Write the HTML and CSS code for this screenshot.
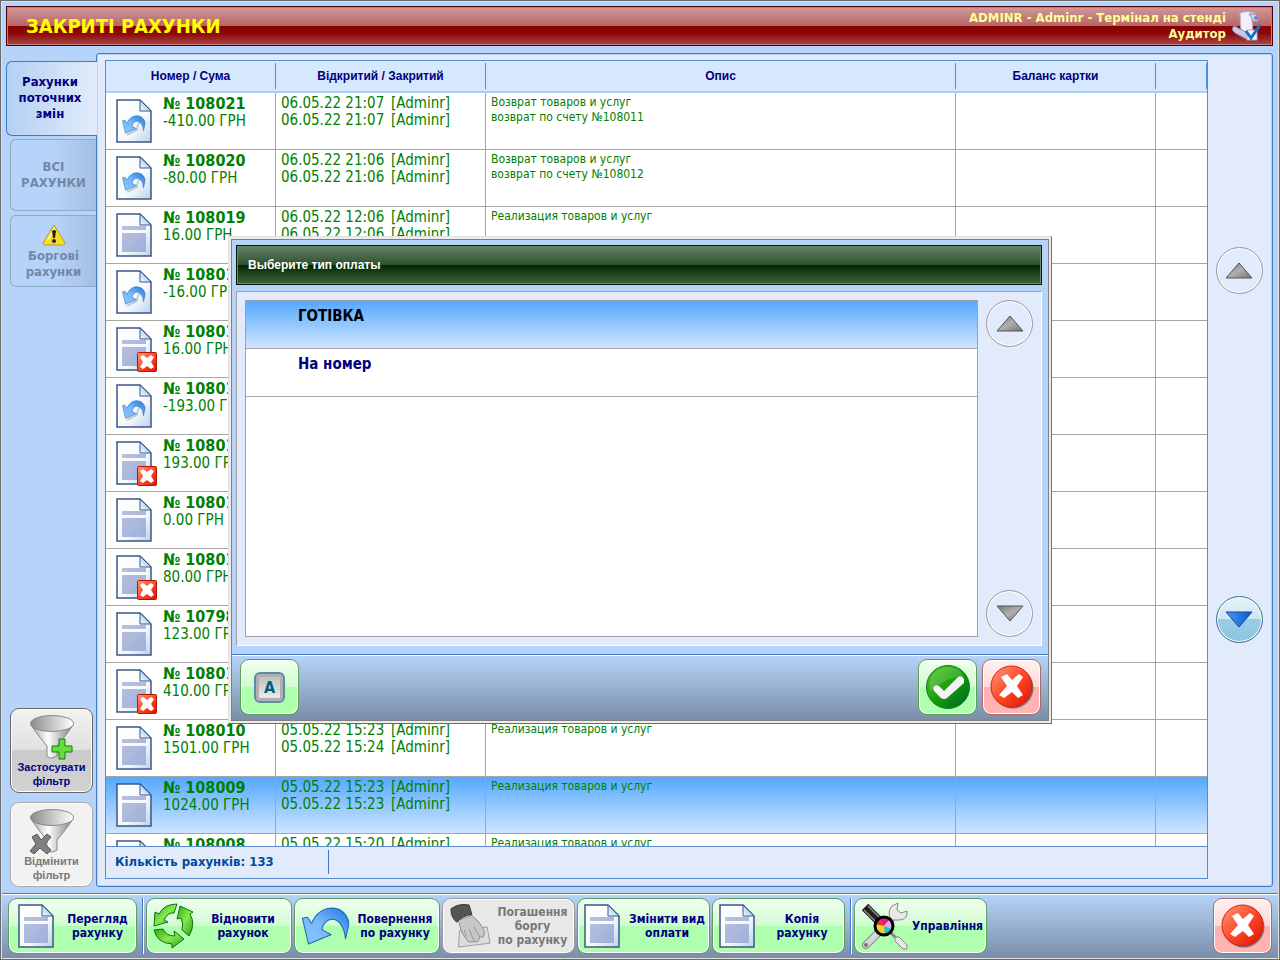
FILE: index.html
```html
<!DOCTYPE html>
<html lang="uk">
<head>
  <meta charset="UTF-8" />
  <meta name="viewport" content="width=device-width, initial-scale=1.0"/>
  <title>Закриті рахунки</title>
  <link rel="stylesheet" href="styles.css">
</head>
<body>
  <!-- shared icons -->
  <svg class="sprite" aria-hidden="true">
    <defs>
      <linearGradient id="paper" x1="0" y1="0" x2="1" y2="1"><stop offset="0" stop-color="#fff"/><stop offset=".6" stop-color="#f6fafd"/><stop offset="1" stop-color="#b9d2ea"/></linearGradient>
      <linearGradient id="fold" x1="0" y1="1" x2="1" y2="0"><stop offset="0" stop-color="#fff"/><stop offset="1" stop-color="#5fb2e6"/></linearGradient>
      <linearGradient id="ink" x1="0" y1="0" x2="1" y2="1"><stop offset="0" stop-color="#bcc0dc"/><stop offset="1" stop-color="#9db0dc"/></linearGradient>
      <linearGradient id="blue" x1="0" y1="1" x2="1" y2="0"><stop offset="0" stop-color="#8cc8ff"/><stop offset=".5" stop-color="#76b6fa"/><stop offset="1" stop-color="#1e78dc"/></linearGradient>
      <linearGradient id="red" x1="0" y1="0" x2="1" y2="1"><stop offset="0" stop-color="#ff9a7c"/><stop offset=".5" stop-color="#fb4a28"/><stop offset="1" stop-color="#e01000"/></linearGradient>
      <linearGradient id="green" x1="0" y1="0" x2="1" y2="1"><stop offset="0" stop-color="#5ccc2c"/><stop offset=".55" stop-color="#109a08"/><stop offset="1" stop-color="#006030"/></linearGradient>
      <linearGradient id="leaf" x1="0" y1="0" x2="1" y2="1"><stop offset="0" stop-color="#2cae10"/><stop offset=".5" stop-color="#86e850"/><stop offset="1" stop-color="#22a010"/></linearGradient>
      <linearGradient id="steel" x1="0" y1="0" x2="1" y2="0"><stop offset="0" stop-color="#a0a0a0"/><stop offset=".4" stop-color="#fff"/><stop offset="1" stop-color="#808080"/></linearGradient>
      <linearGradient id="bowl" x1="0" y1="0" x2="1" y2="0"><stop offset="0" stop-color="#8c8c8c"/><stop offset="1" stop-color="#fff"/></linearGradient>
      <linearGradient id="gray" x1="0" y1="0" x2="1" y2="1"><stop offset="0" stop-color="#777"/><stop offset=".5" stop-color="#b0b0b0"/><stop offset="1" stop-color="#707070"/></linearGradient>
      <linearGradient id="deep" x1="0" y1="0" x2="1" y2="0"><stop offset="0" stop-color="#4e9cf0"/><stop offset="1" stop-color="#0058cc"/></linearGradient>

      <symbol id="page" viewBox="0 0 36 44">
        <path d="M1 1H24L35 12V43H1Z" fill="url(#paper)" stroke="#3d5589" stroke-width="1.500"/>
        <path d="M24 1V12H35Z" fill="url(#fold)" stroke="#3d5589"/>
      </symbol>
      <symbol id="doc" viewBox="0 0 36 44">
        <use href="#page"/>
        <path d="M6 13H30V17H6ZM6 20H30V39H6Z" fill="url(#ink)"/>
      </symbol>
      <symbol id="undo" viewBox="0 0 48 37">
        <path d="M1 11 6 10 10 16C15 4 23 1 31 1 42 2 47 12 46 18L43 31C42 20 37 12 30 12 25 12 21 16 20 22L29 27 24 29 7 36Z" fill="url(#blue)" stroke="#1c64b8" stroke-linejoin="round"/>
      </symbol>
      <symbol id="return" viewBox="0 0 36 44">
        <use href="#page"/>
        <path d="M11 36 21 31Q21 25 25 22" fill="none" stroke="#c4ccd6" stroke-width="2"/>
        <use href="#undo" x="6" y="16" width="24" height="19"/>
      </symbol>
      <symbol id="badge" viewBox="0 0 20 20">
        <rect x=".5" y=".5" width="19" height="19" rx="1" fill="url(#red)" stroke="#b41400"/>
        <path d="M3 5 6 3 10 6 14 3 17 5 14 10 17 15 14 17 10 14 6 17 3 15 6 10Z" fill="#fff"/>
      </symbol>
      <symbol id="cross" viewBox="0 0 44 44">
        <circle cx="23" cy="23" r="20.500" fill="#777"/>
        <circle cx="21.500" cy="21.500" r="20.500" fill="url(#red)" stroke="#d02010"/>
        <path d="M11 12 17 9 22 15 29 9 33 12 27 21 33 30 28 33 22 27 14 33 9 30 17 21Z" fill="#fff"/>
      </symbol>
      <symbol id="check" viewBox="0 0 44 44">
        <circle cx="22" cy="22" r="21.500" fill="url(#green)" stroke="#0a7a1c"/>
        <path d="M4 16Q8 3 22 2 34 3 38 11 20 12 4 26Z" fill="#fff" opacity=".15"/>
        <path d="M7 23Q9 19 13 21L18 26 32 12Q36 10 38 14V18L21 33Q18 35 15 33L8 26Z" fill="#f4f4f4"/>
      </symbol>
      <symbol id="funnel" viewBox="0 0 46 46">
        <path d="M2 10Q3 14 18 32V42Q22 46 28 42V32Q43 14 44 10Z" fill="url(#steel)" stroke="#888"/>
        <ellipse cx="23" cy="9.500" rx="21.500" ry="8" fill="url(#bowl)" stroke="#888"/>
      </symbol>
      <symbol id="up" viewBox="0 0 28 17"><path d="M14 1 27 16H1Z" fill="url(#gray)" stroke="#555"/></symbol>
      <symbol id="down" viewBox="0 0 28 17"><path d="M14 16 27 1H1Z" fill="url(#gray)" stroke="#555"/></symbol>
      <symbol id="down-blue" viewBox="0 0 28 17"><path d="M14 16 27 1H1Z" fill="url(#deep)" stroke="#1446a0"/></symbol>
    </defs>
  </svg>

  <div class="window">
    <header class="titlebar">
      <h1>ЗАКРИТІ РАХУНКИ</h1>
      <div class="user">ADMINR - Adminr - Термінал на стенді<br>Аудитор</div>
      <svg class="user-icon" viewBox="0 0 30 30" aria-hidden="true">
        <path d="M9 2Q18-1 25 3L21 9 22 27 10 20Z" fill="#eef0fa" stroke="#b8b8cc"/>
        <path d="M18 3Q26 2 28 7 27 12 22 10 20 5 18 3Z" fill="#d0d2ea" stroke="#8888b0"/>
        <circle cx="25" cy="7" r="2" fill="#7c7ca8"/>
        <path d="M2 16Q4 14 7 17L17 22V29L4 22Q0 19 2 16Z" fill="#c8cae0" stroke="#8888a8"/>
        <path d="M16 19H26V29H16Z" fill="#f4f6ff" stroke="#aab"/>
        <path d="M15 20 20 27 29 14" fill="none" stroke="#1670d0" stroke-width="3"/>
      </svg>
    </header>

    <main class="main">
      <nav class="side">
        <button class="tab active" type="button">Рахунки поточних змін</button>
        <button class="tab" type="button">ВСІ РАХУНКИ</button>
        <button class="tab" type="button">
          <svg class="warn" viewBox="0 0 24 22" aria-hidden="true">
            <path d="M12 1 23 19Q23 21 21 21H3Q1 21 1 19Z" fill="#f8de20" stroke="#b89c30"/>
            <path d="M12 3 4 18Q10 13 13 4Z" fill="#fff6a0"/>
            <path d="M10 7Q12 5 14 7L13 14H11Z" fill="#222"/><circle cx="12" cy="17" r="2" fill="#222"/>
          </svg>
          Боргові рахунки
        </button>
        <div class="filters">
          <button class="filter" type="button">
            <svg viewBox="0 0 46 46" aria-hidden="true">
              <use href="#funnel"/>
              <path d="M30 25H36V32H43V38H36V45H30V38H23V32H30Z" fill="#66dc3c" stroke="#147c10"/>
            </svg>
            Застосувати фільтр
          </button>
          <button class="filter" type="button" disabled>
            <svg viewBox="0 0 46 46" aria-hidden="true">
              <use href="#funnel"/>
              <path d="M3 29 8 26 12 32 18 26 22 29 16 36 22 42 18 46 11 40 5 46 1 43 7 36Z" fill="#808080" stroke="#555"/>
            </svg>
            Відмінити фільтр
          </button>
        </div>
      </nav>

      <section class="panel">
        <div class="list">
          <div class="rows">
            <table class="bills">
              <colgroup><col class="c-num"><col class="c-date"><col><col class="c-card"><col class="c-end"></colgroup>
              <thead>
                <tr><th><span>Номер / Сума</span></th><th><span>Відкритий / Закритий</span></th><th><span>Опис</span></th><th><span>Баланс картки</span></th><th><span></span></th></tr>
              </thead>
              <tbody>
                <tr>
                  <td><div class="bill"><svg class="ico"><use href="#return"/></svg><div><b>№ 108021</b><br>-410.00 ГРН</div></div></td>
                  <td class="date"><span>06.05.22 21:07</span>[Adminr]<br><span>06.05.22 21:07</span>[Adminr]</td>
                  <td class="desc">Возврат товаров и услуг<br>возврат по счету №108011</td><td></td><td></td>
                </tr>
                <tr>
                  <td><div class="bill"><svg class="ico"><use href="#return"/></svg><div><b>№ 108020</b><br>-80.00 ГРН</div></div></td>
                  <td class="date"><span>06.05.22 21:06</span>[Adminr]<br><span>06.05.22 21:06</span>[Adminr]</td>
                  <td class="desc">Возврат товаров и услуг<br>возврат по счету №108012</td><td></td><td></td>
                </tr>
                <tr>
                  <td><div class="bill"><svg class="ico"><use href="#doc"/></svg><div><b>№ 108019</b><br>16.00 ГРН</div></div></td>
                  <td class="date"><span>06.05.22 12:06</span>[Adminr]<br><span>06.05.22 12:06</span>[Adminr]</td>
                  <td class="desc">Реализация товаров и услуг</td><td></td><td></td>
                </tr>
                <tr>
                  <td><div class="bill"><svg class="ico"><use href="#return"/></svg><div><b>№ 108018</b><br>-16.00 ГРН</div></div></td>
                  <td></td><td></td><td></td><td></td>
                </tr>
                <tr>
                  <td><div class="bill"><svg class="ico"><use href="#doc"/></svg><svg class="badge"><use href="#badge"/></svg><div><b>№ 108017</b><br>16.00 ГРН</div></div></td>
                  <td></td><td></td><td></td><td></td>
                </tr>
                <tr>
                  <td><div class="bill"><svg class="ico"><use href="#return"/></svg><div><b>№ 108016</b><br>-193.00 ГРН</div></div></td>
                  <td></td><td></td><td></td><td></td>
                </tr>
                <tr>
                  <td><div class="bill"><svg class="ico"><use href="#doc"/></svg><svg class="badge"><use href="#badge"/></svg><div><b>№ 108015</b><br>193.00 ГРН</div></div></td>
                  <td></td><td></td><td></td><td></td>
                </tr>
                <tr>
                  <td><div class="bill"><svg class="ico"><use href="#doc"/></svg><div><b>№ 108014</b><br>0.00 ГРН</div></div></td>
                  <td></td><td></td><td></td><td></td>
                </tr>
                <tr>
                  <td><div class="bill"><svg class="ico"><use href="#doc"/></svg><svg class="badge"><use href="#badge"/></svg><div><b>№ 108013</b><br>80.00 ГРН</div></div></td>
                  <td></td><td></td><td></td><td></td>
                </tr>
                <tr>
                  <td><div class="bill"><svg class="ico"><use href="#doc"/></svg><div><b>№ 107982</b><br>123.00 ГРН</div></div></td>
                  <td></td><td></td><td></td><td></td>
                </tr>
                <tr>
                  <td><div class="bill"><svg class="ico"><use href="#doc"/></svg><svg class="badge"><use href="#badge"/></svg><div><b>№ 108011</b><br>410.00 ГРН</div></div></td>
                  <td></td><td></td><td></td><td></td>
                </tr>
                <tr>
                  <td><div class="bill"><svg class="ico"><use href="#doc"/></svg><div><b>№ 108010</b><br>1501.00 ГРН</div></div></td>
                  <td class="date"><span>05.05.22 15:23</span>[Adminr]<br><span>05.05.22 15:24</span>[Adminr]</td>
                  <td class="desc">Реализация товаров и услуг</td><td></td><td></td>
                </tr>
                <tr class="selected">
                  <td><div class="bill"><svg class="ico"><use href="#doc"/></svg><div><b>№ 108009</b><br>1024.00 ГРН</div></div></td>
                  <td class="date"><span>05.05.22 15:23</span>[Adminr]<br><span>05.05.22 15:23</span>[Adminr]</td>
                  <td class="desc">Реализация товаров и услуг</td><td></td><td></td>
                </tr>
                <tr>
                  <td><div class="bill"><svg class="ico"><use href="#doc"/></svg><div><b>№ 108008</b></div></div></td>
                  <td class="date"><span>05.05.22 15:20</span>[Adminr]</td>
                  <td class="desc">Реализация товаров и услуг</td><td></td><td></td>
                </tr>
              </tbody>
            </table>
          </div>
          <div class="total"><span>Кількість рахунків: 133</span></div>
        </div>
        <div class="scroll">
          <button class="round" type="button" aria-label="Вгору" disabled><svg><use href="#up"/></svg></button>
          <button class="round" type="button" aria-label="Вниз"><svg><use href="#down-blue"/></svg></button>
        </div>
      </section>
    </main>

    <footer class="toolbar">
      <button class="btn w-s" type="button"><svg class="ico"><use href="#doc"/></svg><span>Перегляд рахунку</span></button>
      <i class="sep"></i>
      <button class="btn w-l" type="button">
        <svg class="ico-l" viewBox="0 0 42 46" aria-hidden="true">
          <g fill="url(#leaf)" stroke="#0c7410" stroke-linejoin="round">
            <path d="M24 1Q11 1 6 11L2 9 1 23 15 19 11 17Q15 9 21 10Z"/>
            <path d="M27 3 24 16 28 15Q31 21 29 27L36 33Q43 21 37 11L40 9Z"/>
            <path d="M1 27 10 26Q13 33 22 33L21 28 31 36 19 45V41Q4 40 1 27Z"/>
          </g>
        </svg>
        <span>Відновити рахунок</span>
      </button>
      <button class="btn w-l" type="button"><svg class="ico-w"><use href="#undo"/></svg><span>Повернення по рахунку</span></button>
      <button class="btn w-m" type="button" disabled>
        <svg class="ico-l" viewBox="0 0 44 48" aria-hidden="true">
          <path d="M11 29 40 25 43 42 10 46Z" fill="#ddd" stroke="#999"/>
          <path d="M10 18 24 13Q34 21 37 30 37 38 32 35 31 43 26 40 20 43 17 36 12 30 10 18Z" fill="#c8c8c8" stroke="#888"/>
          <path d="M21 27 26 39M26 25 32 35M16 28 18 35" stroke="#909090" fill="none"/>
          <path d="M2 6Q10 0 21 2L24 12Q14 13 8 20Q2 15 2 6Z" fill="#555" stroke="#333"/>
        </svg>
        <span>Погашення боргу<br>по рахунку</span>
      </button>
      <button class="btn w-m" type="button"><svg class="ico"><use href="#doc"/></svg><span>Змінити вид оплати</span></button>
      <button class="btn w-m" type="button"><svg class="ico"><use href="#doc"/></svg><span>Копія<br>рахунку</span></button>
      <i class="sep"></i>
      <button class="btn w-m" type="button">
        <svg class="ico-x" viewBox="0 0 48 48" aria-hidden="true">
          <path d="M4 5 20 21" stroke="#222" stroke-width="9"/><path d="M3 8 17 22M7 4 21 18" stroke="#888" stroke-width="1.500"/>
          <path d="M26 22 35 13" stroke="#888" stroke-width="6"/><path d="M26 22 35 13" stroke="#ddd" stroke-width="4"/>
          <path d="M31 18Q25 11 31 4L37 1 36 8 40 11 46 9Q47 18 38 18Z" fill="#e8e8e8" stroke="#888"/>
          <path d="M19 29 5 43" stroke="#888" stroke-width="8" stroke-linecap="round"/><path d="M19 29 5 43" stroke="#d8d8d8" stroke-width="6" stroke-linecap="round"/><circle cx="5" cy="43" r="2" fill="#777"/>
          <path d="M28 29 36 37" stroke="#888" stroke-width="3"/>
          <path d="M34 35 38 35 46 43V47H42L34 39Z" fill="#e8e8e8" stroke="#888"/>
          <circle cx="23" cy="24" r="9" fill="#f5d020"/>
          <path d="M23 24 17 16Q23 12 29 17Z" fill="#e81890"/><path d="M23 24 29 17Q34 23 31 27Z" fill="#d8b0e0"/><path d="M23 24 31 27Q29 33 24 33Z" fill="#20c0d8"/><path d="M23 24 14 22 17 16Z" fill="#e83020"/>
          <circle cx="23" cy="24" r="9" fill="none" stroke="#000" stroke-width="3"/>
        </svg>
        <span>Управління</span>
      </button>
      <button class="btn square red" type="button" aria-label="Закрити"><svg class="ico-r"><use href="#cross"/></svg></button>
    </footer>

    <div class="dialog" role="dialog" aria-labelledby="dlg-title">
      <div class="dialog-inner">
        <h2 id="dlg-title">Выберите тип оплаты</h2>
        <div class="dialog-body">
          <ul class="options">
            <li><button class="chosen" type="button">ГОТІВКА</button></li>
            <li><button type="button">На номер</button></li>
          </ul>
          <div class="dialog-scroll">
            <button class="round" type="button" aria-label="Вгору" disabled><svg><use href="#up"/></svg></button>
            <button class="round" type="button" aria-label="Вниз" disabled><svg><use href="#down"/></svg></button>
          </div>
        </div>
        <div class="dialog-foot">
          <button class="btn square keyboard" type="button"><span class="key">A</span></button>
          <button class="btn square" type="button" aria-label="Так"><svg class="ico-r"><use href="#check"/></svg></button>
          <button class="btn square red" type="button" aria-label="Скасувати"><svg class="ico-r"><use href="#cross"/></svg></button>
        </div>
      </div>
    </div>
  </div>
</body>
</html>
```
FILE: styles.css
```css
* {
  box-sizing: border-box;
}
body {
  margin: 0;
  font-family: "DejaVu Sans Condensed", "DejaVu Sans", Tahoma, sans-serif;
  color: #000080;
}
button {
  font: inherit;
  color: inherit;
  cursor: pointer;
  padding: 0;
}
.sprite {
  position: absolute;
  width: 0;
  height: 0;
}
.window {
  position: relative;
  display: flex;
  flex-direction: column;
  height: 100vh;
  min-height: 640px;
  background: #b6d4f9;
  border: 1px solid #6b6b6b;
  box-shadow: inset 0 0 0 1px #e0e0e0;
  padding: 5px 1px 1px;
}

/* title bar */
.titlebar {
  display: flex;
  align-items: center;
  height: 40px;
  flex: none;
  margin: 0 5px 7px 4px;
  padding: 0 11px 0 19px;
  border: 1px solid #500000;
  box-shadow: inset 0 0 0 1px #c08080;
  background: linear-gradient(#d09a9a, #b86464 50%, #880000 50%, #8c0808 70%, #ac4848);
}
.titlebar h1 {
  flex: 1;
  margin: 0;
  font-size: 20px;
  color: #ffff00;
}
.user {
  font-size: 13px;
  line-height: 16px;
  font-weight: bold;
  text-align: right;
  color: #ffff99;
}
.user-icon {
  width: 30px;
  height: 30px;
  margin-left: 5px;
}

/* main area */
.main {
  display: flex;
  flex: 1;
  min-height: 0;
  margin: 0 5px 6px 4px;
}
.side {
  display: flex;
  flex-direction: column;
  width: 90px;
  padding-top: 8px;
}
.tab {
  display: flex;
  flex-direction: column;
  align-items: center;
  justify-content: center;
  height: 72px;
  margin: 0 0 4px 4px;
  padding: 0 5px;
  border: 1px solid #8fa9c8;
  border-right: 0;
  border-radius: 6px 0 0 6px;
  background: linear-gradient(to right, #b6d4f9 50%, #a4bfe0);
  font-size: 13px;
  line-height: 16px;
  font-weight: bold;
  color: #7388a4;
}
.tab.active {
  z-index: 1;
  height: 75px;
  margin: 0 -1px 3px 0;
  padding: 0 10px 2px 6px;
  border-color: #4278c4;
  background: linear-gradient(to right, #b4d0f2, #e2ebfb);
  color: #000080;
}
.warn {
  width: 24px;
  height: 22px;
  flex: none;
  margin: 2px 0 2px;
}
.filters {
  display: flex;
  flex-direction: column;
  gap: 9px;
  margin: auto 3px 0 4px;
}
.filter {
  display: flex;
  flex-direction: column;
  align-items: center;
  height: 85px;
  padding-top: 5px;
  border: 1px solid #666;
  border-radius: 9px;
  box-shadow: inset 0 0 0 1px #fff;
  background: linear-gradient(#f2f2f2, #e0e0e0 50%, #cacaca 50%, #d2d2d2);
  font: bold 11px/14px "Liberation Sans", Arial, sans-serif;
}
.filter:disabled {
  border-color: #aaa;
  background: #f2f2f2;
  color: #777;
}
.filter svg {
  width: 46px;
  height: 46px;
  flex: none;
}

/* bill list */
.panel {
  display: flex;
  flex: 1;
  min-width: 0;
  border: 1px solid #4278c4;
  border-radius: 3px;
  box-shadow: inset 0 0 0 1px #b6d4f9;
  background: #e2ebfb;
  padding: 6px 0 7px 8px;
}
.list {
  display: flex;
  flex-direction: column;
  flex: 1;
  min-width: 0;
  border: 1px solid #5a8ccc;
}
.rows {
  flex: 1;
  min-height: 0;
  overflow: hidden;
  background: #fff;
}
.bills {
  width: 100%;
  table-layout: fixed;
  border-spacing: 0;
  color: #008000;
}
.c-num { width: 170px; }
.c-date { width: 210px; }
.c-card { width: 200px; }
.c-end { width: 51px; }
.bills th {
  height: 32px;
  padding: 2px 0;
  background: #d6e8fd;
  border-bottom: 2px solid #a8d0fa;
  font: bold 12px/26px "Liberation Sans", Arial, sans-serif;
  color: #000080;
}
.bills th span {
  display: block;
  height: 26px;
  border-right: 1px solid #4a90dc;
}
.bills td {
  height: 57px;
  padding: 2px 5px 0;
  border-right: 1px solid #a6a6a6;
  border-bottom: 1px solid #a6a6a6;
  vertical-align: top;
  font-size: 15px;
  line-height: 17px;
  white-space: nowrap;
}
.bills td:last-child {
  border-right: 0;
}
.bills .selected td {
  background: linear-gradient(#54a8ff, #d0e6ff) border-box;
}
.bill {
  position: relative;
  display: flex;
  gap: 11px;
  padding-left: 5px;
}
.bill b {
  font-size: 16px;
}
.ico {
  width: 36px;
  height: 44px;
  flex: none;
}
.bill .ico {
  margin-top: 4px;
}
.badge {
  position: absolute;
  left: 26px;
  top: 29px;
  width: 20px;
  height: 20px;
}
.date span {
  display: inline-block;
  width: 110px;
}
.bills .desc {
  font-size: 12px;
  line-height: 15px;
}
.total {
  height: 32px;
  flex: none;
  padding: 3px 9px;
  border-top: 1px solid #5a8ccc;
  font-size: 13px;
  line-height: 24px;
  font-weight: bold;
  color: #004a9c;
}
.total span {
  display: block;
  width: 214px;
  border-right: 1px solid #4278c4;
}
.scroll {
  display: flex;
  flex-direction: column;
  align-items: center;
  justify-content: center;
  gap: 302px;
  width: 64px;
  padding: 0 2px 50px 0;
}
.round {
  display: flex;
  align-items: center;
  justify-content: center;
  width: 47px;
  height: 47px;
  flex: none;
  border: 1px solid #40708c;
  border-radius: 50%;
  box-shadow: inset 0 0 0 1px #fff;
  background: linear-gradient(#e4f2f8, #cfe6f2 50%, #9ccce4 50%, #8cc4e0);
}
.round:disabled {
  border-color: #999;
  background: #e2ebfb;
}
.round svg {
  width: 28px;
  height: 17px;
}

/* bottom bar */
.toolbar {
  display: flex;
  gap: 2px;
  height: 65px;
  flex: none;
  padding: 4px 0 4px 6px;
  border-top: 1px solid #4278c4;
  box-shadow: inset 0 1px 0 #fff;
  background: linear-gradient(#b6d4f9, #7a8ea8);
}
.btn {
  display: flex;
  align-items: center;
  height: 56px;
  padding-left: 9px;
  border: 1px solid #5c9c5c;
  border-radius: 9px;
  box-shadow: inset 0 0 0 1px #fff;
  background: linear-gradient(#f0fff0, #d0fbd0 50%, #aeffae 50%, #b0ffb0);
  font-size: 12px;
  line-height: 14px;
  font-weight: bold;
}
.btn span {
  flex: 1;
  text-align: center;
}
.btn .ico {
  margin-right: 5px;
}
.btn:disabled {
  border-color: #999;
  background: #e8e8e8;
  color: #777;
}
.w-s { width: 129px; }
.w-m { width: 133px; }
.w-l { width: 146px; }
.w-m, .w-l {
  padding-left: 6px;
}
.sep {
  width: 2px;
  margin: 0 0 0 3px;
  background: #4278c4;
  border-right: 1px solid #fff;
}
.ico-l {
  width: 42px;
  height: 46px;
  flex: none;
}
.ico-w {
  width: 50px;
  height: 38px;
  flex: none;
}
.ico-x {
  width: 48px;
  height: 48px;
  flex: none;
}
.ico-r {
  width: 44px;
  height: 44px;
}
.square {
  justify-content: center;
  width: 59px;
  padding: 0;
}
.red {
  border-color: #a86c6c;
  background: linear-gradient(#fff0f0, #ffd8d8 50%, #ffb0b0 50%, #ffb4b4);
}
.toolbar .red {
  margin-left: auto;
  margin-right: 6px;
}

/* payment type dialog */
.dialog {
  position: absolute;
  z-index: 2;
  top: 50%;
  left: 50%;
  transform: translate(-50%, -50%);
  width: 824px;
  max-width: 100%;
  height: 488px;
  border: 1px solid;
  border-color: #e0e0e0 #6b6b6b #6b6b6b #e0e0e0;
  background: #ececec;
  padding: 2px;
}
.dialog-inner {
  display: flex;
  flex-direction: column;
  height: 100%;
  border: 1px solid #808080;
  background: #b6d4f9;
}
.dialog h2 {
  margin: 5px 6px 6px 4px;
  padding-left: 11px;
  border: 1px solid #001800;
  box-shadow: inset 0 0 0 1px #6c8c6c;
  background: linear-gradient(#688468, #2c502c 50%, #002800 50%, #406440);
  font: bold 12px/38px "Liberation Sans", Arial, sans-serif;
  color: #fff;
}
.dialog-body {
  display: flex;
  flex: 1;
  gap: 8px;
  margin: 0 6px 8px 4px;
  padding: 8px;
  border: 1px solid;
  border-color: #a0a0a0 #fff #fff #a0a0a0;
  background: #e2ebfb;
}
.options {
  flex: 1;
  margin: 0;
  padding: 0;
  list-style: none;
  border: 1px solid #a0a0a0;
  background: #fff;
}
.options button {
  display: block;
  width: 100%;
  height: 48px;
  padding: 0 0 18px 52px;
  border: 0;
  border-bottom: 1px solid #a6a6a6;
  background: #fff;
  font-size: 15px;
  font-weight: bold;
  text-align: left;
}
.options .chosen {
  background: linear-gradient(#54a8ff, #d0e6ff);
  color: #000;
}
.dialog-scroll {
  display: flex;
  flex-direction: column;
  justify-content: space-between;
}
.dialog-foot {
  display: flex;
  gap: 5px;
  height: 66px;
  padding: 4px 7px 5px 8px;
  border-top: 1px solid #4278c4;
  box-shadow: inset 0 1px 0 #fff;
  background: linear-gradient(#b6d4f9, #7a8ea8);
}
.keyboard {
  margin-right: auto;
}
.btn .key {
  flex: none;
  width: 31px;
  height: 31px;
  border: 2px solid #5c8ca4;
  border-radius: 6px;
  box-shadow: inset 0 0 0 3px #b0b0b0;
  background: linear-gradient(#bcbcbc, #f0f0f0);
  font-size: 16px;
  line-height: 27px;
  color: #006080;
}
```
